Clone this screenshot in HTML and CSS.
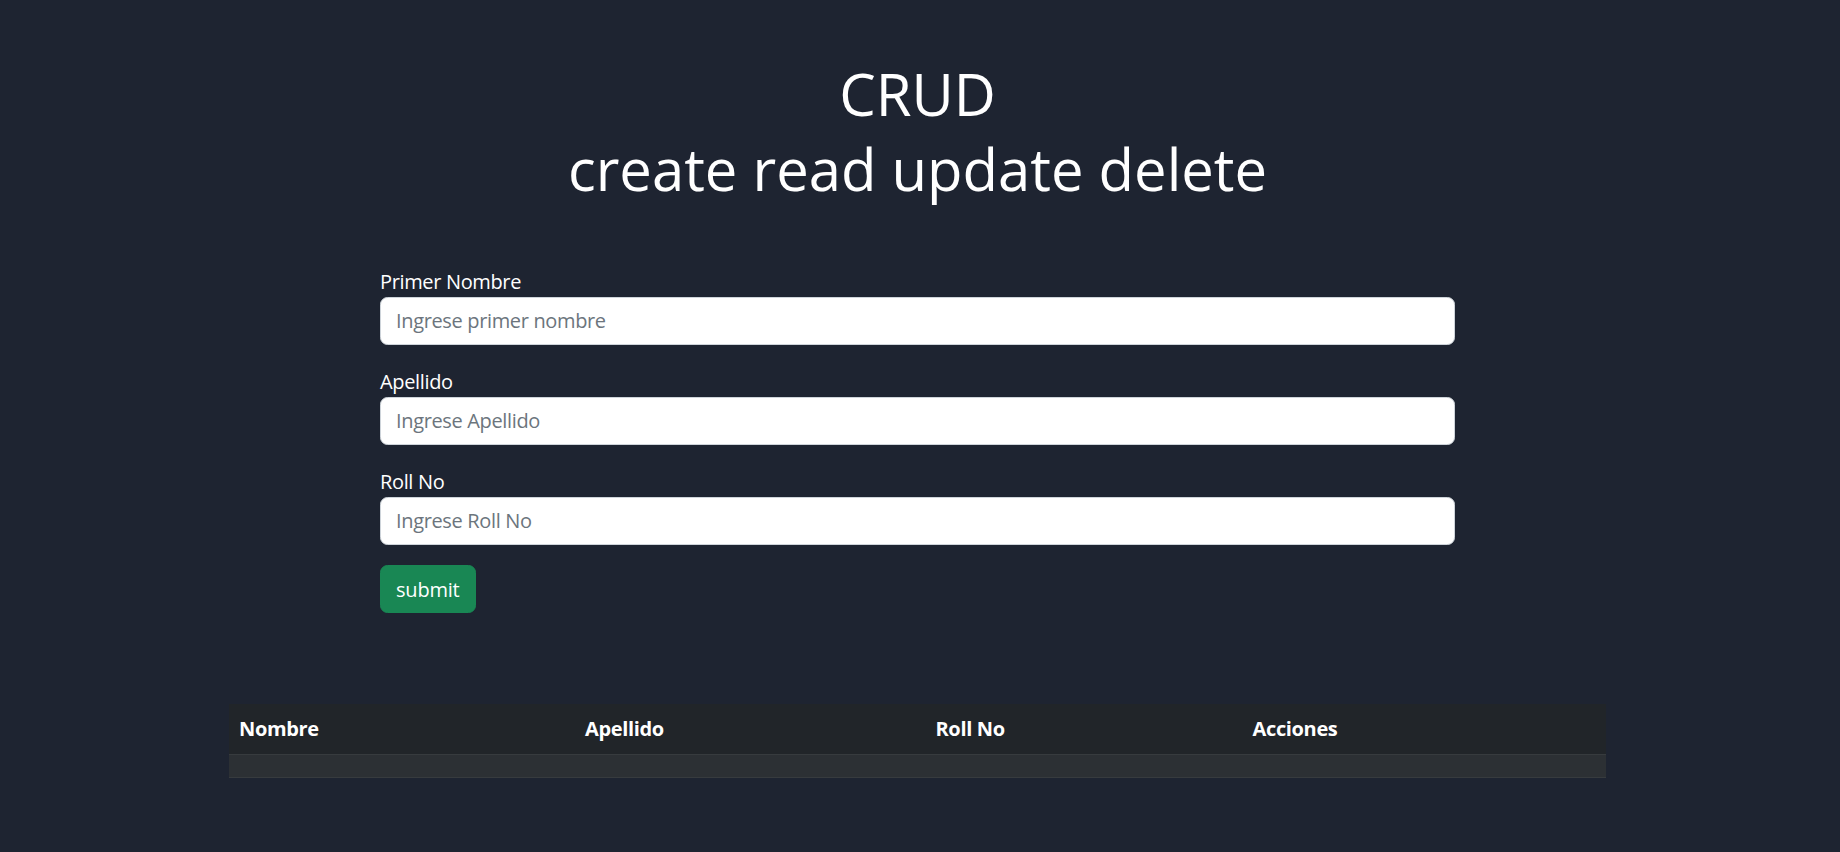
FILE: index.html
```html
<!DOCTYPE html>
<html lang="es">
<head>
<meta charset="utf-8">
<title>CRUD</title>
<link rel="stylesheet" href="styles.css">
</head>
<body>
<div class="page">
  <h1 class="title">CRUD<br>create read update delete</h1>
  <form class="form">
    <div class="group">
      <label class="label" for="nombre">Primer Nombre</label>
      <input class="input" id="nombre" type="text" placeholder="Ingrese primer nombre">
    </div>
    <div class="group">
      <label class="label" for="apellido">Apellido</label>
      <input class="input" id="apellido" type="text" placeholder="Ingrese Apellido">
    </div>
    <div class="group">
      <label class="label" for="roll">Roll No</label>
      <input class="input" id="roll" type="text" placeholder="Ingrese Roll No">
    </div>
    <button class="btn" type="button">submit</button>
  </form>
  <table class="table">
    <thead>
      <tr>
        <th class="col-1">Nombre</th>
        <th class="col-2">Apellido</th>
        <th class="col-3">Roll No</th>
        <th class="col-4">Acciones</th>
      </tr>
    </thead>
    <tbody>
      <tr>
        <td></td><td></td><td></td><td></td>
      </tr>
    </tbody>
  </table>
</div>
</body>
</html>
```

FILE: styles.css
```css
* { box-sizing: border-box; }
html, body { margin: 0; padding: 0; }
body {
  background: #1e2431;
  color: #fff;
  font-family: "Open Sans", "Noto Sans", "Liberation Sans", sans-serif;
  font-size: 20px;
  line-height: 1.5;
  letter-spacing: -0.35px;
  height: 852px;
  overflow: hidden;
}
.page {
  width: 1377px;
  margin-left: 229px;
  padding-top: 56px;
}
.title {
  margin: 0;
  text-align: center;
  font-weight: 400;
  font-size: 58px;
  line-height: 75px;
  letter-spacing: 0;
  color: #fff;
}
.form {
  width: 1075px;
  margin: 59px auto 0;
}
.group {
  margin-bottom: 20.5px;
}
.label {
  display: block;
  line-height: 30px;
  padding-top: 1.5px;
  color: #fff;
}
.input {
  display: block;
  width: 100%;
  height: 48px;
  padding: 0 15px;
  font-family: inherit;
  font-size: 20px;
  letter-spacing: -0.35px;
  color: #212529;
  background: #fff;
  border: 1px solid #ced4da;
  border-radius: 7.5px;
  outline: none;
}
.input::placeholder {
  color: #6c757d;
  opacity: 1;
}
.btn {
  display: inline-block;
  height: 48px;
  padding: 0 15px;
  font-family: inherit;
  font-size: 20px;
  letter-spacing: -0.2px;
  color: #fff;
  background: #198754;
  border: 1px solid #198754;
  border-radius: 7.5px;
}
.table {
  margin-top: 91px;
  width: 1377px;
  border-collapse: collapse;
  table-layout: fixed;
}
.table th {
  background: #212529;
  text-align: left;
  font-weight: 700;
  padding: 10px;
  line-height: 30px;
  border-bottom: 1px solid #373b3e;
  color: #fff;
}
.table td {
  background: #2c3034;
  padding: 11px 10px;
  border-bottom: 1px solid #373b3e;
}
.col-1 { width: 346px; }
.col-2 { width: 350.5px; }
.col-3 { width: 317px; }
.col-4 { width: 363.5px; }
```
